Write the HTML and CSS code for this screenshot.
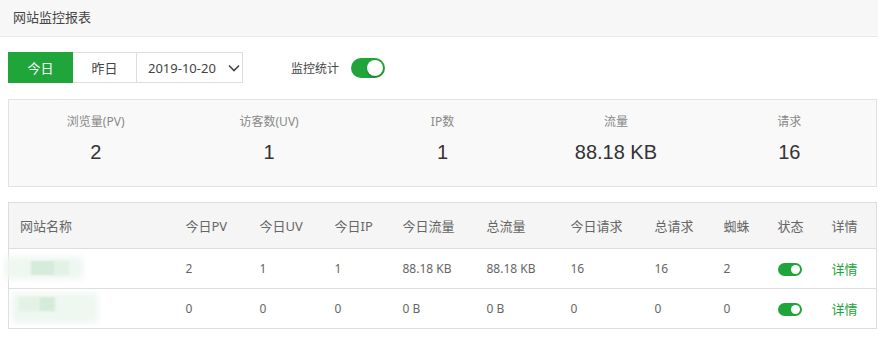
FILE: index.html
```html
<!DOCTYPE html>
<html lang="zh-CN">
<head>
  <meta charset="utf-8">
  <title>网站监控报表</title>
  <link rel="stylesheet" href="styles.css">
</head>
<body>
  <div class="panel-head">网站监控报表</div>

  <div class="content">
    <div class="toolbar">
      <div class="btn-group">
        <span class="btn active">今日</span>
        <span class="btn">昨日</span>
        <span class="btn date">2019-10-20
          <svg class="chevron" width="12" height="8" viewBox="0 0 12 8"><path d="M1 1.5 L6 6.5 L11 1.5" fill="none" stroke="#444" stroke-width="1.6"/></svg>
        </span>
      </div>
      <span class="switch-label">监控统计</span>
      <span class="switch big"><span class="knob"></span></span>
    </div>

    <div class="stats">
      <div class="stat"><div class="stat-name">浏览量(PV)</div><div class="stat-val">2</div></div>
      <div class="stat"><div class="stat-name">访客数(UV)</div><div class="stat-val">1</div></div>
      <div class="stat"><div class="stat-name">IP数</div><div class="stat-val">1</div></div>
      <div class="stat"><div class="stat-name">流量</div><div class="stat-val">88.18 KB</div></div>
      <div class="stat"><div class="stat-name">请求</div><div class="stat-val">16</div></div>
    </div>

    <table class="report">
      <colgroup>
        <col style="width:166px"><col style="width:74px"><col style="width:75px"><col style="width:68px">
        <col style="width:84px"><col style="width:84px"><col style="width:84px"><col style="width:69px">
        <col style="width:54px"><col style="width:54px"><col>
      </colgroup>
      <thead>
        <tr>
          <th>网站名称</th><th>今日PV</th><th>今日UV</th><th>今日IP</th><th>今日流量</th><th>总流量</th>
          <th>今日请求</th><th>总请求</th><th>蜘蛛</th><th>状态</th><th>详情</th>
        </tr>
      </thead>
      <tbody>
        <tr>
          <td class="site">
            <span class="blur b1"></span>
            <span class="px p1"></span><span class="px p2"></span>
          </td>
          <td>2</td><td>1</td><td>1</td><td>88.18 KB</td><td>88.18 KB</td><td>16</td><td>16</td><td>2</td>
          <td><span class="switch small"><span class="knob"></span></span></td>
          <td><a class="detail" href="#">详情</a></td>
        </tr>
        <tr>
          <td class="site">
            <span class="blur b2"></span>
            <span class="px p3"></span><span class="px p4"></span>
          </td>
          <td>0</td><td>0</td><td>0</td><td>0 B</td><td>0 B</td><td>0</td><td>0</td><td>0</td>
          <td><span class="switch small"><span class="knob"></span></span></td>
          <td><a class="detail" href="#">详情</a></td>
        </tr>
      </tbody>
    </table>
  </div>
</body>
</html>
```

FILE: styles.css
```css
body {
  margin: 0;
  font-family: "Noto Sans", "Noto Sans CJK SC", sans-serif;
  font-size: 12px;
  color: #666;
  background: #fff;
}

.panel-head {
  height: 36px;
  line-height: 34px;
  padding-left: 13px;
  background: #f7f7f7;
  border-bottom: 1px solid #ebebeb;
  font-size: 13px;
  color: #444;
}

.content {
  padding: 15px 1px 0 8px;
}

/* toolbar */
.toolbar {
  display: flex;
  align-items: center;
  height: 31px;
}
.btn-group {
  display: flex;
  height: 31px;
}
.btn {
  display: flex;
  align-items: center;
  justify-content: center;
  width: 64px;
  border: 1px solid #ddd;
  border-left: none;
  font-size: 13px;
  color: #444;
  box-sizing: border-box;
}
.btn:first-child {
  border-left: 1px solid #ddd;
}
.btn.active {
  background: #20a53a;
  border-color: #20a53a;
  color: #fff;
  width: 65px;
}
.btn.date {
  width: 106px;
  justify-content: flex-start;
  padding-left: 11px;
  gap: 12px;
}
.switch-label {
  margin-left: 48px;
  font-size: 12px;
  color: #444;
}

/* switch */
.switch {
  position: relative;
  display: inline-block;
  background: #20a53a;
  border-radius: 20px;
}
.switch .knob {
  position: absolute;
  background: #fff;
  border-radius: 50%;
  box-shadow: 0 1px 2px rgba(0,0,0,0.3);
}
.switch.big {
  width: 34px;
  height: 20px;
  margin-left: 12px;
}
.switch.big .knob {
  width: 16px;
  height: 16px;
  top: 2px;
  right: 2px;
}
.switch.small {
  width: 24px;
  height: 13px;
  vertical-align: middle;
}
.switch.small .knob {
  width: 9px;
  height: 9px;
  top: 2px;
  right: 2px;
  box-shadow: none;
}

/* stats */
.stats {
  display: flex;
  margin-top: 16px;
  height: 88px;
  box-sizing: border-box;
  background: #f9f9f9;
  border: 1px solid #e2e2e2;
}
.stat {
  flex: 1;
  text-align: center;
  padding-top: 14px;
}
.stat-name {
  font-size: 12px;
  color: #888;
  line-height: 16px;
}
.stat-val {
  margin-top: 10px;
  font-family: "Liberation Sans", Arial, sans-serif;
  font-size: 20px;
  color: #333;
  line-height: 24px;
}

/* table */
.report {
  width: 100%;
  margin-top: 15px;
  border-collapse: collapse;
  table-layout: fixed;
  border: 1px solid #ddd;
}
.report th {
  height: 45px;
  background: #f5f5f5;
  font-weight: normal;
  font-size: 13px;
  color: #666;
  text-align: left;
  padding: 0 0 0 11px;
  border-bottom: 1px solid #ddd;
}
.report td {
  height: 39px;
  padding: 0 0 0 11px;
  border-bottom: 1px solid #ddd;
  color: #666;
}
.report td.site {
  position: relative;
  padding: 0;
}
.detail {
  color: #20a53a;
  text-decoration: none;
  font-size: 13px;
}

/* masked site names */
.blur {
  position: absolute;
  background: #eef7f0;
  filter: blur(3px);
}
.blur.b1 {
  left: -4px;
  top: 8px;
  width: 78px;
  height: 22px;
}
.blur.b2 {
  left: 3px;
  top: 4px;
  width: 86px;
  height: 30px;
}
.px {
  position: absolute;
  background: #d5ecda;
  filter: blur(1px);
}
.px.p1 {
  left: 22px;
  top: 12px;
  width: 24px;
  height: 14px;
}
.px.p2 {
  left: 46px;
  top: 12px;
  width: 14px;
  height: 14px;
  background: #e2f2e5;
}
.px.p3 {
  left: 30px;
  top: 8px;
  width: 16px;
  height: 14px;
}
.px.p4 {
  left: 10px;
  top: 8px;
  width: 20px;
  height: 14px;
  background: #e2f2e5;
}
```
